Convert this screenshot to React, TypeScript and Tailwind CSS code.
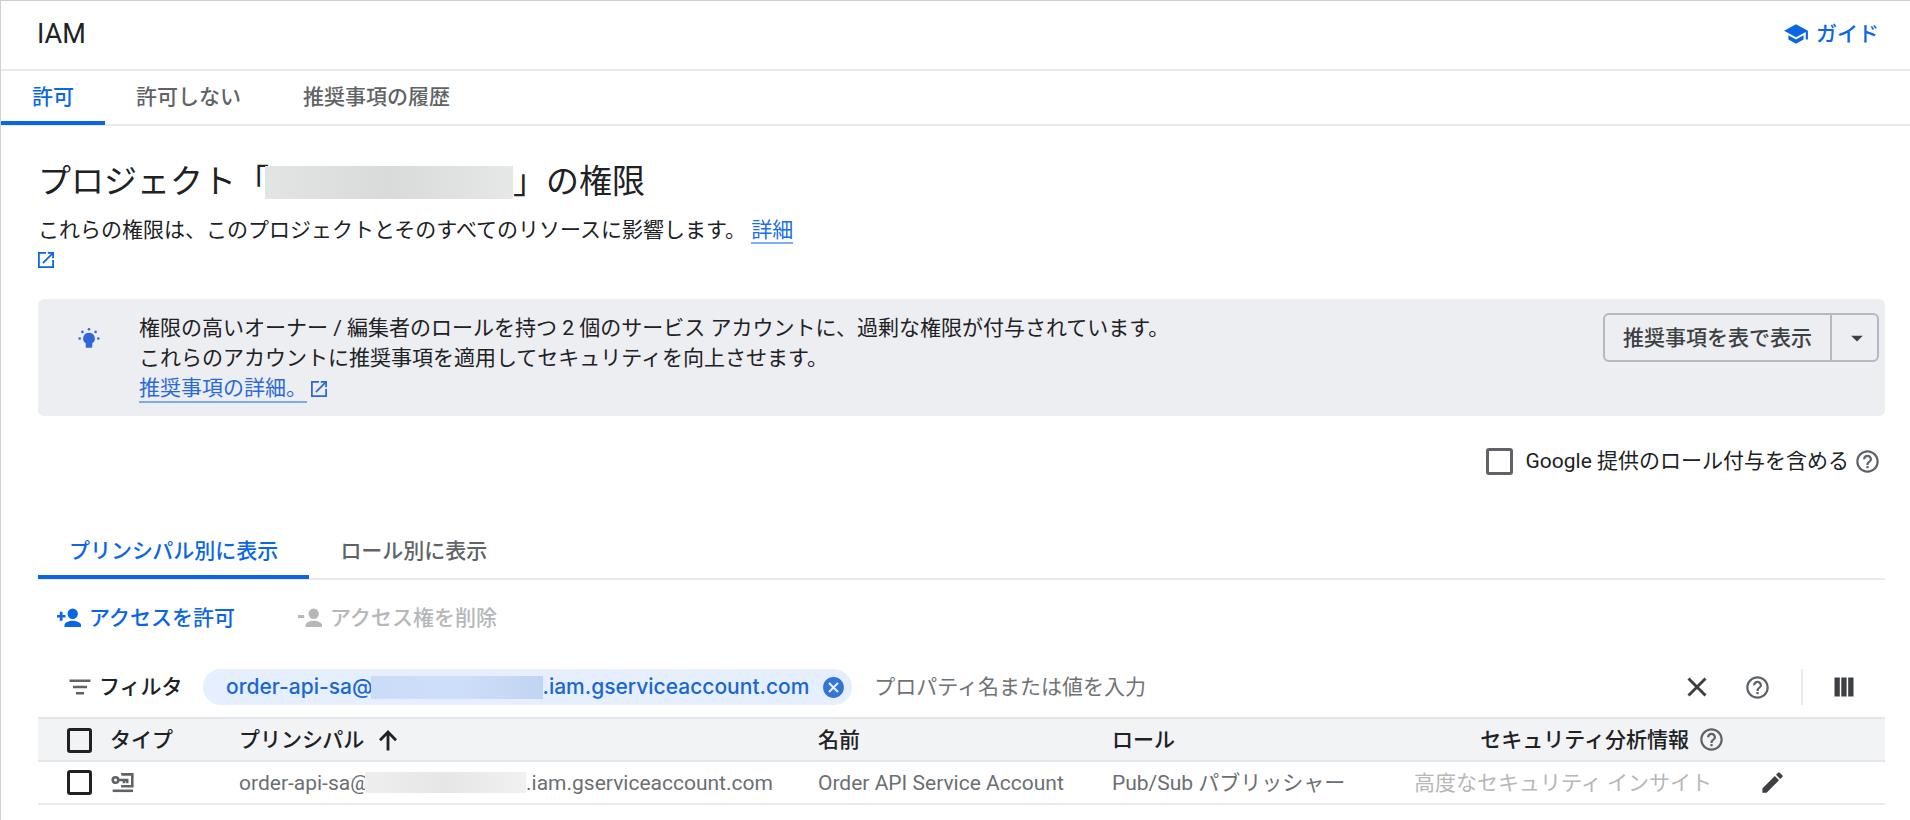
import React from 'react';
import { MdArrowDropDown, MdCancel, MdEdit, MdHelpOutline, MdSchool } from 'react-icons/md';

const pageTabs = ['許可', '許可しない', '推奨事項の履歴'];
const viewTabs = ['プリンシパル別に表示', 'ロール別に表示'];

const bindings = [
  {
    id: 'order-api-sa',
    prefix: 'order-api-sa@',
    suffix: '.iam.gserviceaccount.com',
    name: 'Order API Service Account',
    role: 'Pub/Sub パブリッシャー',
    insight: '高度なセキュリティ インサイト',
  },
];

function Tabs({ items, label }: { items: string[]; label: string }) {
  return (
    <div role="tablist" aria-label={label} className="flex border-b-2 border-[#e8eaed]">
      {items.map((item, i) => (
        <button
          key={item}
          role="tab"
          aria-selected={i === 0}
          className={
            i === 0
              ? '-mb-px h-[54px] border-b-4 border-[#0b66e4] px-[31px] pt-[2px] font-medium text-[#0b66e4]'
              : '-mb-px h-[54px] border-b-4 border-transparent px-[31px] pt-[2px] font-medium text-[#5f6368]'
          }
        >
          {item}
        </button>
      ))}
    </div>
  );
}

function PersonIcon({ sign, className }: { sign: 'plus' | 'minus'; className?: string }) {
  return (
    <svg viewBox="0 0 24 24" fill="currentColor" className={className} aria-hidden="true">
      <circle cx="15.7" cy="7.8" r="5.2" />
      <path d="M7.500 21v-2c0-2.600 4.600-4.200 8.200-4.200S24 16.400 24 19v2z" />
      {sign === 'plus' ? (
        <path d="M2.800 5.800h2.700v3.100h3v2.700h-3v3.200H2.800v-3.200H0V8.900h2.800z" />
      ) : (
        <path d="M0 9h6.200v3H0z" />
      )}
    </svg>
  );
}

function BulbIcon() {
  return (
    <svg viewBox="0 0 24 26" fill="currentColor" className="h-[26px] w-6 text-[#3367d6]" aria-hidden="true">
      <path d="M12 6.700a5.800 5.800 0 0 0-3.300 10.600v3.700a.8.8 0 0 0 .8.8h5a.8.8 0 0 0 .8-.8v-3.700A5.800 5.800 0 0 0 12 6.700z" />
      <circle cx="12" cy="3.200" r="1.300" />
      <circle cx="5.400" cy="5.900" r="1.300" />
      <circle cx="18.600" cy="5.900" r="1.300" />
      <circle cx="2.700" cy="12.500" r="1.300" />
      <circle cx="21.300" cy="12.500" r="1.300" />
    </svg>
  );
}

function ServiceAccountIcon() {
  return (
    <svg viewBox="0 0 24 24" className="h-6 w-6 text-[#5f6368]" aria-label="サービス アカウント">
      <g fill="none" stroke="currentColor" strokeWidth="2.600">
        <circle cx="5.500" cy="9" r="2.800" />
        <path d="M8 9h10.500M14 9v3.200M17.200 9v3.200M12.400 4.500V3.400h9.900v11.800h-9.900v-1.200" />
        <path d="M2.700 19.800H23" />
      </g>
    </svg>
  );
}

function OpenInNewIcon() {
  return (
    <svg viewBox="3 3 18 18" fill="currentColor" className="h-4 w-4" aria-hidden="true">
      <path d="M19 19H5V5h7V3H3v18h18v-9h-2zM14 3v2h3.590l-9.830 9.830 1.410 1.410L19 6.410V10h2V3z" />
    </svg>
  );
}

function FilterIcon() {
  return (
    <svg viewBox="0 0 24 24" fill="currentColor" className="mr-[7px] h-6 w-6 text-[#5f6368]" aria-hidden="true">
      <path d="M1.500 4.500h21v2.600h-21zM5 10.700h14v2.600H5zM8 17h8v2.600H8z" />
    </svg>
  );
}

function ArrowUpIcon() {
  return (
    <svg viewBox="0 0 24 24" className="h-6 w-6" aria-hidden="true">
      <path d="M12 22.500V4M4 12.200L12 4l8 8.200" fill="none" stroke="currentColor" strokeWidth="2.800" />
    </svg>
  );
}

function CloseIcon() {
  return (
    <svg viewBox="0 0 24 24" className="h-6 w-6 text-[#3c4043]" aria-hidden="true">
      <path d="M3.500 3.500l17 17M20.500 3.500l-17 17" fill="none" stroke="currentColor" strokeWidth="2.900" />
    </svg>
  );
}

function Checkbox({ id, label, className }: { id: string; label: string; className: string }) {
  return <input type="checkbox" id={id} aria-label={label} className={className} />;
}

function Banner() {
  return (
    <section className="mt-6 flex items-start rounded-md bg-[#edeef2] pr-[6px]">
      <div className="flex w-[101px] shrink-0 justify-center pt-[27px]">
        <BulbIcon />
      </div>
      <div className="flex-1 pt-[14px] pb-[13px] leading-[30px]">
        <p>権限の高いオーナー / 編集者のロールを持つ 2 個のサービス アカウントに、過剰な権限が付与されています。</p>
        <p>これらのアカウントに推奨事項を適用してセキュリティを向上させます。</p>
        <a href="#recommendations" className="inline-flex items-center gap-1 text-[#2a6ad8]">
          <span className="border-b-2 border-[#80a9e8] leading-[26px]">推奨事項の詳細。</span>
          <OpenInNewIcon />
        </a>
      </div>
      <div className="mt-[14px] flex h-[49px] rounded-md border-2 border-[#b2b9c1] font-medium text-[#3c4043]">
        <button className="border-r-2 border-[#b2b9c1] px-[18px]">推奨事項を表で表示</button>
        <button aria-label="その他のオプション" className="flex w-[45px] items-center justify-center pl-1">
          <MdArrowDropDown className="h-7 w-7" />
        </button>
      </div>
    </section>
  );
}

function FilterBar() {
  return (
    <div className="flex h-[61px] items-center pt-px pl-[30px]">
      <FilterIcon />
      <label htmlFor="filter" className="w-[104px] font-medium">
        フィルタ
      </label>
      <div className="flex h-9 items-center rounded-full bg-[#e6efff] pr-[6px] pl-[23px] font-['Inter',sans-serif] font-medium text-[#1967d2]">
        order-api-sa@
        <span className="-ml-[2px] h-[23px] w-[172px] bg-gradient-to-r from-[#cbdcf8] via-[#cfdef8] to-[#c2d4f4]" />
        .iam.gserviceaccount.com
        <button aria-label="フィルタを削除" className="ml-3">
          <MdCancel className="h-[25px] w-[25px] text-[#3374d9]" />
        </button>
      </div>
      <input
        id="filter"
        type="text"
        placeholder="プロパティ名または値を入力"
        className="ml-[22px] min-w-0 flex-1 outline-none placeholder:text-[#6f7377]"
      />
      <button aria-label="クリア" className="mr-[35px]">
        <CloseIcon />
      </button>
      <button aria-label="ヘルプ">
        <MdHelpOutline className="h-[27px] w-[27px] text-[#5f6368]" />
      </button>
      <div className="mr-[31px] ml-[30px] h-9 w-[2px] bg-[#e8eaed]" />
      <button aria-label="列の表示オプション" className="mr-[31px]">
        <svg viewBox="0 0 20 20" fill="currentColor" className="h-5 w-5 text-[#3c4043]" aria-hidden="true">
          <path d="M0.500 0.500h5.300v19H.5zM7.300 0.500h5.300v19H7.300zM14.200 0.500h5.300v19h-5.300z" />
        </svg>
      </button>
    </div>
  );
}

function BindingsTable() {
  return (
    <table className="w-full table-fixed border-t-2 border-[#e4e6e9] text-left">
      <colgroup>
        <col className="w-[72px]" />
        <col className="w-[129px]" />
        <col />
        <col className="w-[294px]" />
        <col className="w-[250px]" />
        <col className="w-[363px]" />
        <col className="w-[160px]" />
      </colgroup>
      <thead>
        <tr className="h-[43px] border-b-2 border-[#e4e6e9] bg-[#f1f3f4]">
          <th className="pt-[2px] pl-[29px]">
            <Checkbox
              id="select-all"
              label="すべて選択"
              className="block h-[25px] w-[25px] appearance-none rounded-[3px] border-3 border-[#202124]"
            />
          </th>
          <th className="font-medium">タイプ</th>
          <th className="font-medium">
            <span className="flex items-center gap-3">
              プリンシパル
              <ArrowUpIcon />
            </span>
          </th>
          <th className="font-medium">名前</th>
          <th className="font-medium">ロール</th>
          <th className="font-medium">
            <span className="flex items-center justify-end gap-[9px]">
              セキュリティ分析情報
              <MdHelpOutline className="h-[27px] w-[27px] text-[#5f6368]" />
            </span>
          </th>
          <th />
        </tr>
      </thead>
      <tbody className="text-[#6b6f73]">
        {bindings.map((b) => (
          <tr key={b.id} className="h-[43px] border-b-2 border-[#e8eaed]">
            <td className="pl-[29px]">
              <Checkbox
                id={b.id}
                label={b.name}
                className="block h-[25px] w-[25px] appearance-none rounded-[3px] border-3 border-[#202124]"
              />
            </td>
            <td>
              <ServiceAccountIcon />
            </td>
            <td>
              <span className="flex items-center">
                {b.prefix}
                <span className="-ml-1 h-[21px] w-[161px] bg-gradient-to-r from-[#eeeeee] via-[#e6e6e6] to-[#f1f1f1]" />
                {b.suffix}
              </span>
            </td>
            <td>{b.name}</td>
            <td>{b.role}</td>
            <td className="pr-[13px] text-right text-[#b5b7b9]">{b.insight}</td>
            <td className="pl-[34px]">
              <button aria-label="プリンシパルを編集" className="block">
                <MdEdit className="h-[27px] w-[27px] text-[#3c4043]" />
              </button>
            </td>
          </tr>
        ))}
      </tbody>
    </table>
  );
}

function App() {
  return (
    <div className="min-h-screen border-t border-l border-[#d0d0d0] bg-white font-['Roboto','Noto_Sans_CJK_JP',sans-serif] text-[21px] leading-[30px] text-[#202124]">
      <header className="flex h-[70px] items-center justify-between border-b-2 border-[#e8eaed] pr-[31px] pb-[3px] pl-9">
        <h1 className="text-[27px]">IAM</h1>
        <a href="#guide" className="flex items-center gap-[7px] font-medium text-[#0b66e4]">
          <MdSchool className="h-[26px] w-[26px]" />
          ガイド
        </a>
      </header>
      <Tabs items={pageTabs} label="IAM" />

      <main className="pr-[25px] pl-[37px]">
        <h2 className="mt-[33px] flex items-center text-[33px] leading-[46px]">
          プロジェクト「
          <span className="-ml-1 h-[33px] w-[248px] bg-gradient-to-r from-[#e3e5e5] via-[#d9dada] to-[#e6e7e7]" />
          」の権限
        </h2>
        <p className="mt-[10px]">
          これらの権限は、このプロジェクトとそのすべてのリソースに影響します。{' '}
          <a href="#details" className="border-b-2 border-[#80aef5] text-[#1a6fe8]">
            詳細
          </a>
        </p>
        <a href="#details" aria-label="新しいタブで開く" className="flex h-[30px] items-center text-[#0b66e4]">
          <OpenInNewIcon />
        </a>

        <Banner />

        <div className="mt-[30px] flex items-center justify-end pr-1">
          <Checkbox
            id="include-google"
            label="Google 提供のロール付与を含める"
            className="mr-[13px] h-[27px] w-[27px] appearance-none rounded-[3px] border-3 border-[#5f6368]"
          />
          <label htmlFor="include-google">Google 提供のロール付与を含める</label>
          <MdHelpOutline className="ml-[5px] h-[27px] w-[27px] text-[#5f6368]" />
        </div>

        <div className="mt-[49px]">
          <Tabs items={viewTabs} label="表示" />
        </div>

        <div className="flex h-[76px] items-center gap-[63px] pl-[19px] font-medium">
          <button className="flex items-center gap-2 text-[#0b66e4]">
            <PersonIcon sign="plus" className="h-6 w-6" />
            アクセスを許可
          </button>
          <button disabled className="flex items-center gap-2 text-[#b5b7b9]">
            <PersonIcon sign="minus" className="h-6 w-6" />
            アクセス権を削除
          </button>
        </div>

        <FilterBar />
        <BindingsTable />
      </main>
    </div>
  );
}

export default App;
